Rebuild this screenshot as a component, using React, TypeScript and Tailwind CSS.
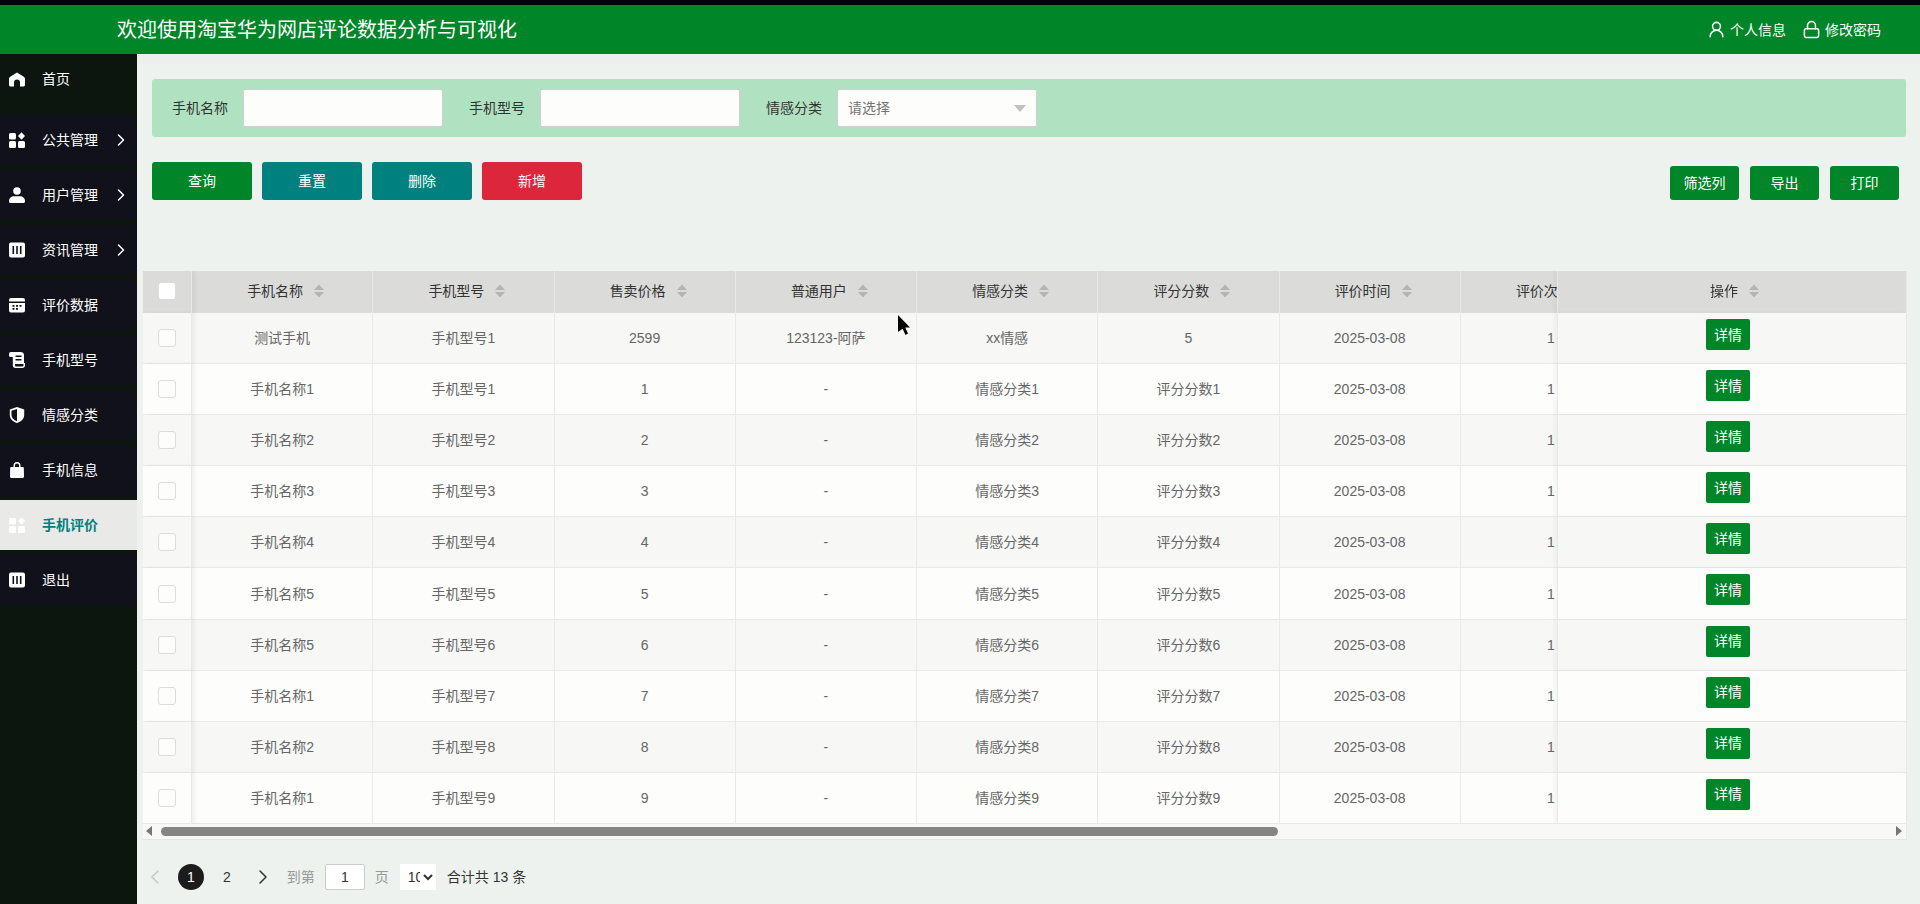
import { ChevronLeft, ChevronRight, Lock, UserRound } from "lucide-react";

const font = "font-['Liberation_Sans','Noto_Sans_CJK_SC',sans-serif]";

const HomeIcon = () => (
  <svg viewBox="0 0 16 16" className="size-4" fill="currentColor">
    <path d="M8 1.500 1.200 5.800C.5 6.300 0 7 0 8v6c0 .8.700 1.500 1.500 1.500H5v-4a3 3 0 0 1 6 0v4h3.500c.8 0 1.500-.7 1.500-1.500V8c0-1-.5-1.700-1.200-2.200z" />
  </svg>
);

const AppsIcon = () => (
  <svg viewBox="0 0 16 16" className="size-4" fill="currentColor">
    <rect x="0" y="1" width="7" height="6.500" rx="1.500" />
    <rect x="0" y="9" width="7" height="7" rx="1.500" />
    <rect x="9" y="9" width="7" height="7" rx="1.500" />
    <path d="M12.500.2 16 4l-3.500 3.800L9 4z" />
  </svg>
);

const PersonIcon = () => (
  <svg viewBox="0 0 16 16" className="size-4" fill="currentColor">
    <circle cx="8" cy="4" r="3.800" />
    <path d="M0 14c0-3 2.500-4.800 5-4.800h6c2.500 0 5 1.800 5 4.800v.5c0 .8-.7 1.500-1.500 1.500h-13C.7 16 0 15.300 0 14.500z" />
  </svg>
);

const BarsIcon = () => (
  <svg viewBox="0 0 16 16" className="size-4" fill="currentColor">
    <path
      fillRule="evenodd"
      d="M2 .5h12A2 2 0 0 1 16 2.500v11a2 2 0 0 1-2 2H2a2 2 0 0 1-2-2v-11a2 2 0 0 1 2-2zM3.500 4v8h1.600V4zm3.700 0v8h1.600V4zm3.700 0v8h1.600V4z"
    />
  </svg>
);

const KeysIcon = () => (
  <svg viewBox="0 0 16 16" className="size-4" fill="currentColor">
    <path
      fillRule="evenodd"
      d="M2 1h12a2 2 0 0 1 2 2v1.500H0V3a2 2 0 0 1 2-2zM0 6h16v7.500a2 2 0 0 1-2 2H2a2 2 0 0 1-2-2zm3.500 2v1.800h2V8zm3.500 0v1.800h2V8zm3.500 0v1.800h2V8zM3.500 11v1.800h2V11zm3.500 0v1.800h2V11z"
    />
  </svg>
);

const ScrollIcon = () => (
  <svg viewBox="0 0 16 16" className="size-4" fill="currentColor">
    <path
      fillRule="evenodd"
      d="M2 0h9.500C13.500 0 15 1.300 15 3v8h1v2.500c0 1.500-1.200 2.500-2.500 2.500H6.500C5 16 3.800 15 3.800 13.500V5H1.500C.6 5 0 4.300 0 3.500V2c0-1.100.9-2 2-2zm4.500 3.500V5h6V3.500zm0 3.500v1.500h6V7zM6 12v1.500c0 .5.400 1 1 1h6.500c.5 0 1-.4 1-1V12z"
    />
  </svg>
);

const ShieldIcon = () => (
  <svg viewBox="0 0 16 16" className="size-4" fill="currentColor">
    <path
      fillRule="evenodd"
      d="M8 0 15.200 2.500V8c0 4-3.200 6.800-7.200 8C4 14.800.8 12 .8 8V2.500zM8 1.900 2.500 3.700V8c0 3 2.400 5.100 5.500 6.200z"
    />
  </svg>
);

const BagIcon = () => (
  <svg viewBox="0 0 16 16" className="size-4" fill="currentColor">
    <path d="M8 0a3.500 3.500 0 0 1 3.500 3.500V5h2.300c.6 0 1 .4 1 1l.2 8.500c0 .8-.6 1.500-1.500 1.500h-11C1.600 16 1 15.300 1 14.500L1.200 6c0-.6.4-1 1-1h2.300V3.500A3.500 3.500 0 0 1 8 0zm0 1.400a2.100 2.100 0 0 0-2.100 2.100V5h4.200V3.500A2.100 2.100 0 0 0 8 1.400z" />
  </svg>
);

const menu = [
  { label: "公共管理", icon: <AppsIcon />, arrow: true },
  { label: "用户管理", icon: <PersonIcon />, arrow: true },
  { label: "资讯管理", icon: <BarsIcon />, arrow: true },
  { label: "评价数据", icon: <KeysIcon /> },
  { label: "手机型号", icon: <ScrollIcon /> },
  { label: "情感分类", icon: <ShieldIcon /> },
  { label: "手机信息", icon: <BagIcon /> },
  { label: "手机评价", icon: <AppsIcon />, active: true },
  { label: "退出", icon: <BarsIcon /> },
];

const columns = ["手机名称", "手机型号", "售卖价格", "普通用户", "情感分类", "评分分数", "评价时间", "评价次数"];

const rows = [
  ["测试手机", "手机型号1", "2599", "123123-阿萨", "xx情感", "5"],
  ["手机名称1", "手机型号1", "1", "-", "情感分类1", "评分分数1"],
  ["手机名称2", "手机型号2", "2", "-", "情感分类2", "评分分数2"],
  ["手机名称3", "手机型号3", "3", "-", "情感分类3", "评分分数3"],
  ["手机名称4", "手机型号4", "4", "-", "情感分类4", "评分分数4"],
  ["手机名称5", "手机型号5", "5", "-", "情感分类5", "评分分数5"],
  ["手机名称5", "手机型号6", "6", "-", "情感分类6", "评分分数6"],
  ["手机名称1", "手机型号7", "7", "-", "情感分类7", "评分分数7"],
  ["手机名称2", "手机型号8", "8", "-", "情感分类8", "评分分数8"],
  ["手机名称1", "手机型号9", "9", "-", "情感分类9", "评分分数9"],
];

const SortIcon = () => (
  <svg viewBox="0 0 12 14" className="h-[14px] w-3 text-[#b4b4b4]" fill="currentColor">
    <path d="M6 0.500 11 6H1z" />
    <path d="M6 13.500 1 8h10z" />
  </svg>
);

const Checkbox = ({ white }: { white?: boolean }) => (
  <div className={`size-[18px] rounded-[3px] border border-[#dcdcdc] ${white ? "bg-white" : "bg-[#fdfdfc]"}`} />
);

const Sidebar = () => (
  <aside className="flex w-[137px] shrink-0 flex-col bg-[#0c160f] text-white">
    <div className="flex h-[61px] items-center gap-[17px] pb-[12px] pl-[9px] text-sm">
      <HomeIcon />
      <span>首页</span>
    </div>
    <div className="flex flex-col gap-[5px]">
      {menu.map((item) => (
        <div
          key={item.label}
          className={`flex h-[50px] items-center gap-[17px] pl-[9px] text-sm ${
            item.active ? "bg-[#e9e9e7] font-bold text-[#00807f]" : "bg-[#11111b]"
          }`}
        >
          <span className={item.active ? "text-white" : ""}>{item.icon}</span>
          <span>{item.label}</span>
          {item.arrow && <ChevronRight size={20} strokeWidth={1.800} className="-ml-[4px]" />}
        </div>
      ))}
    </div>
  </aside>
);

const DataTable = () => (
  <div className="mt-[71px] ml-[-9px] mr-[-1px] border-r border-b border-[#e6e6e6] text-sm">
    <div className="overflow-hidden">
      <table className="w-[1848px] table-fixed border-separate border-spacing-0 text-center">
        <thead>
          <tr className="h-[42px] bg-[#dbdbda] text-[#333]">
            <th className="sticky left-0 w-[49px] border-r border-[#e8e8e8] bg-[#dbdbda] p-0 pb-[2px] font-normal shadow-[3px_0_4px_rgba(0,0,0,0.05)]">
              <div className="flex justify-center">
                <Checkbox white />
              </div>
            </th>
            {columns.map((c) => (
              <th key={c} className="w-[181.25px] border-r border-[#e8e8e8] p-0 pb-[2px] font-normal">
                <span className="inline-flex items-center gap-[10px] whitespace-nowrap pl-2">
                  {c}
                  <SortIcon />
                </span>
              </th>
            ))}
            <th className="sticky right-0 w-[349px] border-l border-[#e8e8e8] bg-[#dbdbda] p-0 pb-[2px] font-normal shadow-[-3px_0_4px_rgba(0,0,0,0.04)]">
              <span className="inline-flex items-center gap-[10px] pl-[6px]">
                操作
                <SortIcon />
              </span>
            </th>
          </tr>
        </thead>
        <tbody className="text-[#666]">
          {rows.map((r, i) => {
            const bg = i % 2 === 0 ? "bg-[#f7f7f6]" : "bg-[#fdfdfc]";
            return (
              <tr key={i} className={`h-[51.1px] ${bg}`}>
                <td className={`sticky left-0 border-r border-b border-[#e9e9e9] p-0 shadow-[3px_0_4px_rgba(0,0,0,0.05)] ${bg}`}>
                  <div className="flex justify-center">
                    <Checkbox />
                  </div>
                </td>
                {r.map((v, j) => (
                  <td key={j} className="border-r border-b border-[#e9e9e9] p-0">
                    {v}
                  </td>
                ))}
                <td className="border-r border-b border-[#e9e9e9] p-0">2025-03-08</td>
                <td className="border-r border-b border-[#e9e9e9] p-0">1</td>
                <td className={`sticky right-0 border-l border-b border-[#e9e9e9] p-0 align-top shadow-[-3px_0_4px_rgba(0,0,0,0.04)] ${bg}`}>
                  <button className="mt-[6px] mr-[8px] h-[31px] w-[44px] rounded-[2px] bg-[#008528] text-sm text-white">详情</button>
                </td>
              </tr>
            );
          })}
        </tbody>
      </table>
    </div>
    <div className="flex h-[15px] items-center bg-[#f8f8f7] pl-[3px] pr-[4px]">
      <svg viewBox="0 0 6 10" className="h-[10px] w-[6px] text-[#777]" fill="currentColor">
        <path d="M6 0v10L0 5z" />
      </svg>
      <div className="ml-[9px] h-[9px] w-[1117px] rounded-full bg-[#858585]" />
      <svg viewBox="0 0 6 10" className="ml-auto h-[10px] w-[6px] text-[#777]" fill="currentColor">
        <path d="M0 0v10l6-5z" />
      </svg>
    </div>
  </div>
);

const Pagination = () => (
  <div className="ml-[-9px] mt-[24px] flex h-[26px] items-center text-sm">
    <ChevronLeft size={24} strokeWidth={1.500} className="text-[#c4c8c6]" />
    <span className="ml-[11px] flex size-[26px] items-center justify-center rounded-full bg-[#1c1c1c] text-white">1</span>
    <span className="ml-[19px] text-[#333]">2</span>
    <ChevronRight size={24} strokeWidth={1.500} className="ml-[20px] text-[#333]" />
    <span className="ml-[12px] text-[#999]">到第</span>
    <div className="ml-[10px] flex h-[26px] w-[40px] items-center justify-center rounded-[2px] border border-[#ccc] bg-white text-[#333]">
      1
    </div>
    <span className="ml-[10px] text-[#999]">页</span>
    <select className="ml-[11px] h-[26px] w-[36px] bg-white pl-[4px] text-sm text-[#333]" defaultValue="10">
      <option value="10">10</option>
      <option value="20">20</option>
    </select>
    <span className="ml-[11px] text-[#333]">合计共 13 条</span>
  </div>
);

export default function App() {
  return (
    <div className={`relative flex h-[904px] flex-col overflow-hidden border-t-[5px] border-black ${font}`}>
      <header className="flex h-[49px] shrink-0 items-center bg-[#008528] pl-[117px] pr-[39px] text-white">
        <h1 className="text-xl">欢迎使用淘宝华为网店评论数据分析与可视化</h1>
        <div className="ml-auto flex items-center text-sm">
          <UserRound size={19} strokeWidth={1.900} />
          <span className="ml-[4px]">个人信息</span>
          <Lock size={19} strokeWidth={1.900} className="ml-[16px]" />
          <span className="ml-[4px]">修改密码</span>
        </div>
      </header>
      <div className="flex min-h-0 flex-1">
        <Sidebar />
        <main className="min-w-0 flex-1 border-t-[10px] border-[#efeeee] bg-[#edf2ef] pt-[15px] pl-[15px] pr-[14px]">
          <div className="flex h-[58px] items-center rounded-[3px] bg-[#b0e2c1] pl-[20px] text-sm text-[#333]">
            <span>手机名称</span>
            <div className="ml-[15px] h-[38px] w-[200px] rounded-[2px] border border-[#d0d0d0] bg-[#fdfdfc]" />
            <span className="ml-[26px]">手机型号</span>
            <div className="ml-[15px] h-[38px] w-[200px] rounded-[2px] border border-[#d0d0d0] bg-[#fdfdfc]" />
            <span className="ml-[26px]">情感分类</span>
            <div className="ml-[15px] flex h-[38px] w-[200px] items-center justify-between rounded-[2px] border border-[#d0d0d0] bg-[#fdfdfc] px-[10px] text-[#757575]">
              <span>请选择</span>
              <svg viewBox="0 0 12 7" className="h-[7px] w-3 text-[#c0c0c0]" fill="currentColor">
                <path d="M0 0h12L6 7z" />
              </svg>
            </div>
          </div>
          <div className="mt-[25px] flex items-start text-sm text-white">
            <button className="h-[38px] w-[100px] rounded-[3px] bg-[#008528]">查询</button>
            <button className="ml-[10px] h-[38px] w-[100px] rounded-[3px] bg-[#00807f]">重置</button>
            <button className="ml-[10px] h-[38px] w-[100px] rounded-[3px] bg-[#00807f]">删除</button>
            <button className="ml-[10px] h-[38px] w-[100px] rounded-[3px] bg-[#dc263c]">新增</button>
            <div className="ml-auto mt-[4px] mr-[7px] flex gap-[11px]">
              <button className="h-[34px] w-[69px] rounded-[3px] bg-[#008528]">筛选列</button>
              <button className="h-[34px] w-[69px] rounded-[3px] bg-[#008528]">导出</button>
              <button className="h-[34px] w-[69px] rounded-[3px] bg-[#008528]">打印</button>
            </div>
          </div>
          <DataTable />
          <Pagination />
        </main>
      </div>
      <svg viewBox="0 0 12 20" className="absolute left-[898px] top-[310px] h-[20px] w-[12px]" fill="#000">
        <path d="M0 0 12 12.500 7.200 12.500 10 18.500 7.500 20 4.600 13.800 0 17z" />
      </svg>
    </div>
  );
}
